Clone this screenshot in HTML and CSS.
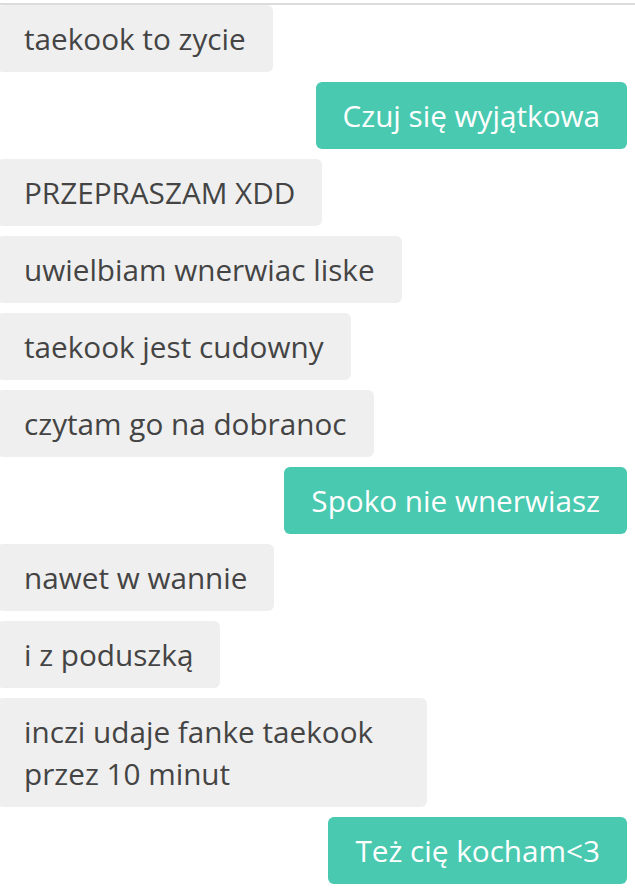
FILE: index.html
```html
<!DOCTYPE html>
<html lang="pl">
<head>
<meta charset="utf-8">
<link rel="stylesheet" href="styles.css">
</head>
<body>
<div class="chat">
  <div class="msg in">taekook to zycie</div>
  <div class="msg out">Czuj się wyjątkowa</div>
  <div class="msg in">PRZEPRASZAM XDD</div>
  <div class="msg in">uwielbiam wnerwiac liske</div>
  <div class="msg in">taekook jest cudowny</div>
  <div class="msg in">czytam go na dobranoc</div>
  <div class="msg out">Spoko nie wnerwiasz</div>
  <div class="msg in">nawet w wannie</div>
  <div class="msg in">i z poduszką</div>
  <div class="msg in">inczi udaje fanke taekook przez 10 minut</div>
  <div class="msg out">Też cię kocham&lt;3</div>
</div>
</body>
</html>
```
FILE: styles.css
```css
html, body {
  margin: 0;
  padding: 0;
  background: #ffffff;
}
body {
  font-family: "Open Sans", "Noto Sans", sans-serif;
  overflow: hidden;
}
.chat {
  margin-top: 3px;
  border-top: 2px solid #dcdcdc;
  display: flex;
  flex-direction: column;
  gap: 10px;
  padding-right: 8px;
}
.msg {
  box-sizing: border-box;
  max-width: 430px;
  padding: 12.5px 27px;
  font-size: 29.7px;
  line-height: 42px;
  border-radius: 6px;
}
.in {
  align-self: flex-start;
  margin-left: -3px;
  background: #efefef;
  color: #444444;
}
.out {
  align-self: flex-end;
  background: #48c9b0;
  color: #ffffff;
}
```
